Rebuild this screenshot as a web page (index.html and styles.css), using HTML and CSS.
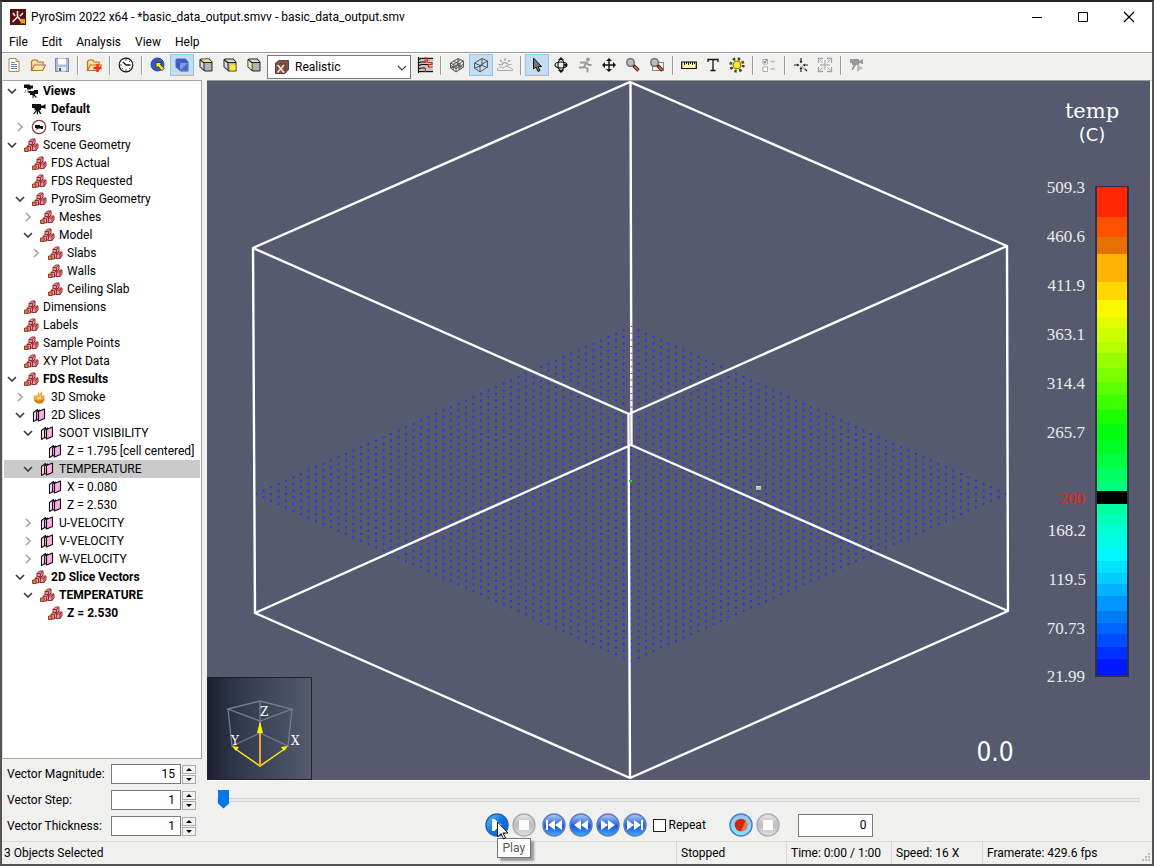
FILE: index.html
```html
<!DOCTYPE html>
<html lang="en">
<head>
<meta charset="utf-8">
<title>PyroSim 2022 x64</title>
<link rel="stylesheet" href="styles.css">
</head>
<body>
<svg class="defs" aria-hidden="true">
  <defs>
    <linearGradient id="gBlue" x1="0" y1="0" x2="0" y2="1"><stop offset="0" stop-color="#b9cdf4"/><stop offset=".35" stop-color="#4c86ea"/><stop offset=".55" stop-color="#1a56e0"/><stop offset="1" stop-color="#3fb0fa"/></linearGradient>
    <linearGradient id="gPlay" x1="0" y1="0" x2="1" y2="1"><stop offset="0" stop-color="#6fc4f6"/><stop offset=".5" stop-color="#0878e4"/><stop offset="1" stop-color="#0a58d8"/></linearGradient>
    <linearGradient id="gGray" x1="0" y1="0" x2="0" y2="1"><stop offset="0" stop-color="#e6e6e8"/><stop offset=".5" stop-color="#bcbcc0"/><stop offset="1" stop-color="#e2e2e4"/></linearGradient>
    <linearGradient id="gRec" x1="0" y1="0" x2="0" y2="1"><stop offset="0" stop-color="#9cc4f0"/><stop offset="1" stop-color="#7fe2ff"/></linearGradient>
    <linearGradient id="gBox"><stop offset="0" stop-color="#1c1f30"/><stop offset=".35" stop-color="#353c50"/><stop offset="1" stop-color="#555a6e"/></linearGradient>
    <symbol id="chev-d" viewBox="0 0 16 16"><path d="M4 6l4 4 4-4" fill="none" stroke="#404040" stroke-width="1.7"/></symbol>
    <symbol id="chev-r" viewBox="0 0 16 16"><path d="M6 4l4 4-4 4" fill="none" stroke="#a6a6a6" stroke-width="1.7"/></symbol>
    <symbol id="cubes" viewBox="0 0 16 16"><g fill="#e09aa0" stroke="#9a2a30" stroke-width="1" stroke-linejoin="round"><path d="M6 4.500L8.500 2H12v4L9.500 8.500H6z"/><path d="M6 4.500h3.500v4M9.500 4.500L12 2" fill="none"/><path d="M9 9l2-2h4v4l-2 2.500H9z"/><path d="M9 9h4v4.500M13 9l2-2" fill="none"/><path d="M4 9.500l2-2h3.500V12l-2 2H4z"/><path d="M4 9.500h3.500V14M7.500 9.500l2-2" fill="none"/></g><path d="M1.500 11h3.500v3.500H1.500z" fill="#d8823e" stroke="#9a3a20"/></symbol>
    <symbol id="slice" viewBox="0 0 16 16"><g fill="#f8aee2" stroke="#151015" stroke-width="1.1" stroke-linejoin="round"><path d="M2.500 5.500l4-3v9.500l-4 2.500z" fill="#fbe0f4"/><path d="M5.500 5l3-2v10.500l-3-1z"/><path d="M7.500 4.500l6-2.500v9.500l-6 2.500z"/></g></symbol>
    <symbol id="camera" viewBox="0 0 16 16"><path d="M1 3h9v1.500h2L14.500 3v5L12 7h-2v2H8.500l2 4H9L7 10v3.500H5.800V10L3.500 13H2l3-4H3.500V7H1z" fill="#111"/></symbol>
    <symbol id="cameras" viewBox="0 0 16 16"><path d="M1 1.500h6v1h3v3H8v1H4V5H1zM5 8h6V7h4v4h-3v1l2 2.500h-1.500l-2-2V15H9.500v-3H7v-2H5z" fill="#111"/><path d="M3 7l-1.500 3M5 7v3" stroke="#888"/></symbol>
    <symbol id="tour" viewBox="0 0 16 16"><circle cx="8" cy="8" r="6.700" fill="#fff" stroke="#8c3a34" stroke-width="1.200"/><path d="M4 6h5v1h3v3h-2v-.5H7L5.500 11V9H4z" fill="#111"/></symbol>
    <symbol id="fire" viewBox="0 0 16 16"><path d="M3 6C2 10 3 14 8 14.500s6.500-4 5-9l-1.500 2L11 2 8.500 5.500 7.500 3 6 7z" fill="#f2a63a"/><path d="M8 14.500c-3 0-4.500-2-5-4 3 1.500 7 1 10.500-.5-.4 2.500-2 4.500-5.500 4.500z" fill="#d87c1e"/><path d="M7 7l1 2 2-3v4H6z" fill="#ffe49a"/></symbol>
    <symbol id="shaded" viewBox="0 0 16 16"><path d="M1.500 2.500L3 1.500h8.500L14.500 5v9l-1 .5H6.500L1.500 10z" fill="#222"/><path d="M3 2.500h8l2.500 2.500H6z" fill="#d9d9d2"/><path d="M2.500 3.500L5.500 6.500v6l-3-3z" fill="#dcdcdc"/><path d="M6.500 6h7v7.500h-7z" fill="#b2b2b2"/></symbol>
    <symbol id="wire" viewBox="0 0 16 16"><path d="M1.500 6L9 1.500l5.500 2.500v6L7 15l-5.500-4zM1.500 6L7 8.500l7.500-4.500M7 8.500V15M9 1.500v7L1.500 11M9 8.500l5.500 2" fill="none" stroke="#555" stroke-width="1"/></symbol>
    <symbol id="glass" viewBox="0 0 16 16"><circle cx="5.500" cy="5.500" r="3.800" fill="#b6bcc0" stroke="#666" stroke-width="1.300"/><path d="M8.500 8.500l5 5" stroke="#5a1610" stroke-width="3.400"/><path d="M9.500 9.500l3.500 3.500" stroke="#d8806c" stroke-width="1.400"/></symbol>
    <symbol id="folder" viewBox="0 0 16 16"><path d="M1.500 13V4.500L3 3h4l1 2h5v3" fill="#f6dca4" stroke="#b87420" stroke-width="1.200"/><path d="M1.500 13.500L4.500 8h11l-3 5.500z" fill="#fce8ba" stroke="#b87420" stroke-width="1.200"/></symbol>
  </defs>
</svg>

<div class="window">
  <header class="titlebar">
    <svg class="logo" viewBox="0 0 16 16"><path d="M0 0h16v16H0z" fill="#5a0f12"/><path d="M7.500 2v6l-5 5M8 8l4 5M3 4l2 3M13 4l-3 3" fill="none" stroke="#f5e6df" stroke-width="1.600"/><path d="M10 10h5v5l-2-1-2 1z" fill="#f39a1d"/></svg>
    <h1>PyroSim 2022 x64 - *basic_data_output.smvv - basic_data_output.smv</h1>
    <div class="winbtns">
      <button aria-label="Minimize"><svg viewBox="0 0 12 12"><path d="M1 6.500h10" stroke="#000"/></svg></button>
      <button aria-label="Maximize"><svg viewBox="0 0 12 12"><path d="M1.500 1.500h9v9h-9z" fill="none" stroke="#000"/></svg></button>
      <button aria-label="Close"><svg viewBox="0 0 12 12"><path d="M1 1l10 10M11 1L1 11" stroke="#000" stroke-width="1.200"/></svg></button>
    </div>
  </header>
  <nav class="menubar"><button>File</button><button>Edit</button><button>Analysis</button><button>View</button><button>Help</button></nav>

  <div class="toolbar" role="toolbar">
    <button aria-label="New"><svg viewBox="0 0 16 16"><path d="M3 1.500h7l3 3v10H3z" fill="#fff" stroke="#b58a50"/><path d="M10 1.500v3h3" fill="none" stroke="#b58a50"/><path d="M5 5.500h4M5 7.500h6M5 9.500h6M5 11.500h6" stroke="#5d87b0"/></svg></button>
    <button aria-label="Open"><svg><use href="#folder"/></svg></button>
    <button aria-label="Save"><svg viewBox="0 0 16 16"><path d="M1.500 1.500h13v13h-13z" fill="#a9bdd8" stroke="#6c86ac"/><path d="M4 1.500h8v6H4z" fill="#fff"/><path d="M4 10h8v4.500H4z" fill="#e6ebf2"/><path d="M5 11h2v3H5z" fill="#3c5478"/></svg></button>
    <i class="sep"></i>
    <button aria-label="Merge"><svg viewBox="0 0 16 16"><use href="#folder"/><path d="M11.500 7v8M7.500 11h8" stroke="#fb2a10" stroke-width="2.400"/></svg></button>
    <i class="sep"></i>
    <button aria-label="Time"><svg viewBox="0 0 16 16"><circle cx="8" cy="8" r="6.800" fill="#fff" stroke="#111" stroke-width="1.200"/><path d="M8 8l-3-3M8 8h4.500" stroke="#111" stroke-width="1.300"/><path d="M8 2v2M8 12v2M2 8h2M12 4l-1 1M4 12l1-1M12 12l-1-1" stroke="#555"/></svg></button>
    <i class="sep"></i>
    <button aria-label="Pick"><svg viewBox="0 0 16 16"><circle cx="7.500" cy="7.500" r="6.500" fill="#3459c4" stroke="#2a469c"/><path d="M6 5.500h6l-1.800 1.800 4 4.200-2.200 2.200-4-4.200L6 11.500z" fill="#ffee20" stroke="#222" stroke-width=".8"/></svg></button>
    <button class="on" aria-label="Solid"><svg viewBox="0 0 16 16"><path d="M1.500 2.500L3 1.500h8.500L14.500 5v9l-1 .5H6.500L1.500 10z" fill="#3f5fc4"/><path d="M6 6h7.500v7.500H6z" fill="#8298dc"/><path d="M6 13.500L13.500 6v7.500z" fill="#4c6acb"/></svg></button>
    <button aria-label="Top"><svg viewBox="0 0 16 16"><use href="#shaded"/><path d="M3 2.500h8l2.500 2.500H6z" fill="#efdc7e"/></svg></button>
    <button aria-label="Front"><svg viewBox="0 0 16 16"><use href="#shaded"/><path d="M8 7.500h5.500v6H8z" fill="#fff01c"/></svg></button>
    <button aria-label="Side"><svg viewBox="0 0 16 16"><use href="#shaded"/><path d="M2.500 3.500L5.500 6.500v6l-3-3z" fill="#efe79a"/></svg></button>
    <div class="combo">
      <svg class="combo-icon" viewBox="0 0 16 16"><path d="M1.500 4L5 1.500h9.500v9L11 14.500H1.500z" fill="#a8503f" stroke="#4b4642"/><path d="M2 5h9.500v9M11.500 5l3-3M2 8h9M2 11h9M5 2l3 3M9 2l2 3M12 8l2.500-2M12 11l2.500-2" fill="none" stroke="#4b4946"/><path d="M3.500 6l6.500 7.500M10 6l-6.500 7.500" stroke="#f3ece8" stroke-width="1.400"/></svg>
      <select aria-label="Render mode"><option>Realistic</option></select>
      <svg class="combo-arrow" viewBox="0 0 12 12"><path d="M2 4l4 4 4-4" fill="none" stroke="#444" stroke-width="1.100"/></svg>
    </div>
    <button aria-label="Floors"><svg viewBox="0 0 16 16"><path d="M1 0h15v16H1z" fill="#c4c4c4"/><path d="M1.500 0v16M1 3l3-1.500h12M1 6l3-1h5M1 9l3-1.500h7M1 12l3-1h4M1 14.500h15" fill="none" stroke="#111" stroke-width="1.200"/><path d="M7 1h3.500v4H7M7 3h3M11 5.500h4v2h-3.500V10H15.500M8.500 11v4" fill="none" stroke="#d22a18" stroke-width="1.200"/></svg></button>
    <i class="sep"></i>
    <button aria-label="Mesh"><svg viewBox="0 0 16 16"><use href="#wire"/><path d="M4.200 7.200v5.800M1.500 8.500L7 11.500l7.500-4.300M4.500 4.200L10 7v6M11.500 2.800L4 7.500M11 6v6.500" fill="none" stroke="#555"/></svg></button>
    <button class="on" aria-label="Outline"><svg><use href="#wire"/></svg></button>
    <button aria-label="Scene"><svg viewBox="0 0 16 16"><path d="M.5 13.500V12L3 9.500l3 1.500 3-2 6.500 3v1.500z" fill="#f2f2f2" stroke="#a9a9a9"/><path d="M5 8.500a3 3 0 0 1 6 .3M8 4V1M4.800 5L3 3M11.200 5L13 3M4 7.500H1.500M12 7.500h2.500" fill="none" stroke="#a0a0a0" stroke-width="1.200"/></svg></button>
    <i class="sep"></i>
    <button class="on" aria-label="Select"><svg viewBox="0 0 16 16"><path d="M4.500 1v11l2.500-2 2 4.500 2-1L9 9.500h3.500z" fill="#777" stroke="#111"/></svg></button>
    <button aria-label="Orbit"><svg viewBox="0 0 16 16"><ellipse cx="8" cy="8" rx="3" ry="5.500" fill="none" stroke="#111" stroke-width="1.200"/><ellipse cx="8" cy="8" rx="6" ry="3" fill="none" stroke="#111" stroke-width="1.200"/><path d="M8 0L5 3h6zM8 16l-3-3h6zM10 8l4-2v4z" fill="#111"/><path d="M6 6h4v4H6z" fill="#f0f0ee"/></svg></button>
    <button aria-label="Walk"><svg viewBox="0 0 16 16"><circle cx="11" cy="2.500" r="1.900" fill="#9b9b9b"/><path d="M3 5.500h6.500l-3 5H2M9.500 5.500l2 2.500h3M6.500 9.500l4 2v4" fill="none" stroke="#9b9b9b" stroke-width="1.900"/></svg></button>
    <button aria-label="Pan"><svg viewBox="0 0 16 16"><path d="M8 2v12M2 8h12" stroke="#111" stroke-width="1.400"/><path d="M8 1L5 4h6zM8 15l-3-3h6zM1 8l3-3v6zM15 8l-3-3v6z" fill="#111"/></svg></button>
    <button aria-label="Zoom"><svg><use href="#glass"/></svg></button>
    <button aria-label="Zoom region"><svg viewBox="0 0 16 16"><path d="M3.500 5.500h11v8h-11z" fill="none" stroke="#222" stroke-dasharray="1 1"/><use href="#glass"/></svg></button>
    <i class="sep"></i>
    <button aria-label="Measure"><svg viewBox="0 0 16 16"><path d="M.7 5h14.600v6.500H.7z" fill="#fff6b0" stroke="#111" stroke-width="1.200"/><path d="M3.500 5v3M5.500 5v2M7.500 5v3M9.500 5v2M11.500 5v3M13.500 5v2" stroke="#111"/></svg></button>
    <button aria-label="Label"><svg viewBox="0 0 16 16"><path d="M3 5V2.500h10V5M8 2.500v11M5.500 13.500h5" fill="none" stroke="#111" stroke-width="1.300"/></svg></button>
    <button aria-label="Lighting"><svg viewBox="0 0 16 16"><circle cx="8" cy="8" r="6.300" fill="none" stroke="#4d4a10" stroke-width="2.800" stroke-dasharray="2.400 2.548"/><circle cx="8" cy="8" r="3.900" fill="#ffec1c" stroke="#7c7410"/></svg></button>
    <i class="sep"></i>
    <button aria-label="Options"><svg viewBox="0 0 16 16"><path d="M2 2.500h4.500V7H2zM2 10h4.500v4.500H2z" fill="#fff" stroke="#aaa"/><path d="M3 4l1 2 2-4" fill="none" stroke="#777"/><path d="M9.500 4.500H14M9.500 12H14" stroke="#bbb" stroke-width="1.600"/></svg></button>
    <i class="sep"></i>
    <button aria-label="Center"><svg viewBox="0 0 16 16"><path d="M8 1v4M8 11v4M1 8h4M11 8h4M12 12l2 2" stroke="#222" stroke-width="1.200"/><path d="M8 6.500L6.500 4h3zM8 9.500L6.500 12h3zM6.500 8L4 6.500v3zM9.500 8L12 6.500v3z" fill="#222"/><path d="M9 9l4 5" stroke="#c66"/></svg></button>
    <button aria-label="Fit"><svg viewBox="0 0 16 16"><path d="M1.500 6V1.500H6M10 1.500h4.500V6M14.500 10v4.500H10M6 14.500H1.500V10" fill="none" stroke="#a4a4a4" stroke-width="1.300"/><path d="M8 3v3.500M8 10v3M3 8h3.500M10 8h3M7 7h2v2H7zM3 3l2.500 2.500M13 3l-2.500 2.500M3 13l2.500-2.500M13 13l-2.500-2.500" fill="none" stroke="#a4a4a4"/></svg></button>
    <i class="sep"></i>
    <button aria-label="Record view"><svg viewBox="0 0 16 16"><path d="M1 2h9v2l4-2v5l-4-1v2H7l-3 5H2.500l2-5H3V6H1z" fill="#989898"/><path d="M8 7l6 4-6 4z" fill="#bcbcbc"/></svg></button>
  </div>

  <main class="main">
    <aside class="side">
      <ul class="tree">
        <li class="l0 b"><svg><use href="#chev-d"/></svg><svg><use href="#cameras"/></svg><span>Views</span></li>
        <li class="l1 b"><svg></svg><svg><use href="#camera"/></svg><span>Default</span></li>
        <li class="l1"><svg><use href="#chev-r"/></svg><svg><use href="#tour"/></svg><span>Tours</span></li>
        <li class="l0"><svg><use href="#chev-d"/></svg><svg><use href="#cubes"/></svg><span>Scene Geometry</span></li>
        <li class="l1"><svg></svg><svg><use href="#cubes"/></svg><span>FDS Actual</span></li>
        <li class="l1"><svg></svg><svg><use href="#cubes"/></svg><span>FDS Requested</span></li>
        <li class="l1"><svg><use href="#chev-d"/></svg><svg><use href="#cubes"/></svg><span>PyroSim Geometry</span></li>
        <li class="l2"><svg><use href="#chev-r"/></svg><svg><use href="#cubes"/></svg><span>Meshes</span></li>
        <li class="l2"><svg><use href="#chev-d"/></svg><svg><use href="#cubes"/></svg><span>Model</span></li>
        <li class="l3"><svg><use href="#chev-r"/></svg><svg><use href="#cubes"/></svg><span>Slabs</span></li>
        <li class="l3"><svg></svg><svg><use href="#cubes"/></svg><span>Walls</span></li>
        <li class="l3"><svg></svg><svg><use href="#cubes"/></svg><span>Ceiling Slab</span></li>
        <li class="l0"><svg></svg><svg><use href="#cubes"/></svg><span>Dimensions</span></li>
        <li class="l0"><svg></svg><svg><use href="#cubes"/></svg><span>Labels</span></li>
        <li class="l0"><svg></svg><svg><use href="#cubes"/></svg><span>Sample Points</span></li>
        <li class="l0"><svg></svg><svg><use href="#cubes"/></svg><span>XY Plot Data</span></li>
        <li class="l0 b"><svg><use href="#chev-d"/></svg><svg><use href="#cubes"/></svg><span>FDS Results</span></li>
        <li class="l1"><svg><use href="#chev-r"/></svg><svg><use href="#fire"/></svg><span>3D Smoke</span></li>
        <li class="l1"><svg><use href="#chev-d"/></svg><svg><use href="#slice"/></svg><span>2D Slices</span></li>
        <li class="l2"><svg><use href="#chev-d"/></svg><svg><use href="#slice"/></svg><span>SOOT VISIBILITY</span></li>
        <li class="l3"><svg></svg><svg><use href="#slice"/></svg><span>Z = 1.795 [cell centered]</span></li>
        <li class="l2 sel"><svg><use href="#chev-d"/></svg><svg><use href="#slice"/></svg><span>TEMPERATURE</span></li>
        <li class="l3"><svg></svg><svg><use href="#slice"/></svg><span>X = 0.080</span></li>
        <li class="l3"><svg></svg><svg><use href="#slice"/></svg><span>Z = 2.530</span></li>
        <li class="l2"><svg><use href="#chev-r"/></svg><svg><use href="#slice"/></svg><span>U-VELOCITY</span></li>
        <li class="l2"><svg><use href="#chev-r"/></svg><svg><use href="#slice"/></svg><span>V-VELOCITY</span></li>
        <li class="l2"><svg><use href="#chev-r"/></svg><svg><use href="#slice"/></svg><span>W-VELOCITY</span></li>
        <li class="l1 b"><svg><use href="#chev-d"/></svg><svg><use href="#cubes"/></svg><span>2D Slice Vectors</span></li>
        <li class="l2 b"><svg><use href="#chev-d"/></svg><svg><use href="#cubes"/></svg><span>TEMPERATURE</span></li>
        <li class="l3 b"><svg></svg><svg><use href="#cubes"/></svg><span>Z = 2.530</span></li>
      </ul>
      <form class="vectors">
        <div class="field"><label for="mag">Vector Magnitude:</label><input id="mag" type="text" value="15"><span class="spin"><button type="button" aria-label="Increase magnitude"><i class="up"></i></button><button type="button" aria-label="Decrease magnitude"><i class="down"></i></button></span></div>
        <div class="field"><label for="step">Vector Step:</label><input id="step" type="text" value="1"><span class="spin"><button type="button" aria-label="Increase step"><i class="up"></i></button><button type="button" aria-label="Decrease step"><i class="down"></i></button></span></div>
        <div class="field"><label for="thick">Vector Thickness:</label><input id="thick" type="text" value="1"><span class="spin"><button type="button" aria-label="Increase thickness"><i class="up"></i></button><button type="button" aria-label="Decrease thickness"><i class="down"></i></button></span></div>
      </form>
    </aside>

    <section class="stage">
      <div class="viewport">
        <svg class="scene" viewBox="207 81 943 699">
          <path id="dots" stroke="#3030e6" stroke-width="2" fill="none"/>
          <g stroke="#fff" stroke-width="2.400" fill="none" stroke-linejoin="round">
            <path d="M630 82L253 248L629 414L1007 246ZM255 613L631 445L1008 611L630 778ZM253 248L255 613M1007 246L1008 611M630.500 82L631.500 445M628.500 414L630 778"/>
          </g>
          <path d="M631.500 326V410" stroke="#54586d" stroke-width="2" stroke-dasharray="1 5.700"/>
          <path d="M629 480h3v2h-3z" fill="#17e01c"/>
          <path d="M756 486h5v4h-5z" fill="#b7b7b7"/><path d="M756 486h5v1h-5z" fill="#ddd"/>
          <g text-anchor="middle"><text x="1092" y="118" class="t1">temp</text><text x="1092" y="141" class="t2">(C)</text></g>
          <g class="nums" text-anchor="end">
            <text x="1085" y="193">509.3</text><text x="1085" y="242">460.6</text><text x="1085" y="291">411.9</text><text x="1085" y="340">363.1</text><text x="1085" y="389">314.4</text><text x="1085" y="438">265.7</text><text x="1085" y="504" class="red">200</text><text x="1086" y="536">168.2</text><text x="1086" y="585">119.5</text><text x="1085" y="634">70.73</text><text x="1085" y="682">21.99</text>
          </g>
          <path d="M1095 186h34v491h-34z" fill="#2d3148"/>
          <g id="bands" shape-rendering="crispEdges"></g>
          <text class="clock" x="995" y="761" text-anchor="middle">0.0</text>
          <path d="M207.500 677.500h104v102h-104z" fill="url(#gBox)" stroke="#222"/>
          <path d="M228 709L260 701L292 709L260 721ZM228 709L232 746L260 733L288 746L292 709M260 701V733" fill="none" stroke="#777b8e" stroke-width="1.300"/>
          <path d="M234 748L260 766L286 748" fill="none" stroke="#ffe320" stroke-width="1.500"/><path d="M260 766V730" stroke="#f0a53c" stroke-width="2"/>
          <path d="M260 721l3 12h-6zM232 746l7 1-3 4zM288 746l-7 1 3 4z" fill="#fff200"/>
          <g class="axes"><text x="260" y="716">Z</text><text x="231" y="745">Y</text><text x="291" y="745">X</text></g>
        </svg>
      </div>
      <input class="timeline" type="range" min="0" max="60" value="0" aria-label="Time">
      <div class="player">
        <div class="tipwrap">
          <button class="round" aria-label="Play"><svg viewBox="0 0 24 24"><circle cx="12" cy="12" r="11" fill="url(#gPlay)" stroke="#2c62b4" stroke-width="1.500"/><path d="M7 6h3v12H7zM9 6l8 6-8 6z" fill="#fff"/></svg></button>
          <svg class="cursor" viewBox="0 0 12 19"><path d="M.5 1v15l3.500-3.500L6.500 18l2-1-2.500-5h5z" fill="#fff" stroke="#111"/></svg>
          <span class="tip" role="tooltip">Play</span>
        </div>
        <button class="round" aria-label="Stop"><svg viewBox="0 0 24 24"><circle cx="12" cy="12" r="11" fill="url(#gGray)" stroke="#b0b0b4" stroke-width="1.500"/><path d="M7 7h10v10H7z" fill="#fafafa"/></svg></button>
        <i class="space"></i>
        <button class="round" aria-label="First"><svg viewBox="0 0 24 24"><circle cx="12" cy="12" r="11" fill="url(#gBlue)" stroke="#5f7fb8" stroke-width="1.500"/><path d="M4 7h2v10H4zM13 7v10l-7-5zM20 7v10l-7-5z" fill="#fff"/></svg></button>
        <button class="round" aria-label="Rewind"><svg viewBox="0 0 24 24"><circle cx="12" cy="12" r="11" fill="url(#gBlue)" stroke="#5f7fb8" stroke-width="1.500"/><path d="M12 7v10l-7-5zM19 7v10l-7-5z" fill="#fff"/></svg></button>
        <button class="round" aria-label="Forward"><svg viewBox="0 0 24 24"><circle cx="12" cy="12" r="11" fill="url(#gBlue)" stroke="#5f7fb8" stroke-width="1.500"/><path d="M5 7v10l7-5zM12 7v10l7-5z" fill="#fff"/></svg></button>
        <button class="round" aria-label="Last"><svg viewBox="0 0 24 24"><circle cx="12" cy="12" r="11" fill="url(#gBlue)" stroke="#5f7fb8" stroke-width="1.500"/><path d="M18 7h2v10h-2zM4 7v10l7-5zM11 7v10l7-5z" fill="#fff"/></svg></button>
        <label class="repeat"><input type="checkbox">Repeat</label>
        <button class="round" aria-label="Record"><svg viewBox="0 0 24 24"><circle cx="12" cy="12" r="11" fill="url(#gRec)" stroke="#4b82c8" stroke-width="1.500"/><circle cx="12" cy="12" r="6.300" fill="#cf2710"/><path d="M12 18.300A6.300 6.300 0 0 0 16.500 7.500z" fill="#e97445"/></svg></button>
        <button class="round" aria-label="Stop recording"><svg viewBox="0 0 24 24"><circle cx="12" cy="12" r="11" fill="url(#gGray)" stroke="#b0b0b4" stroke-width="1.500"/><path d="M7 7h10v10H7z" fill="#fafafa"/></svg></button>
        <input class="frame" type="text" value="0" aria-label="Frame">
      </div>
    </section>
  </main>

  <footer class="status"><span class="msg">3 Objects Selected</span><span class="c1">Stopped</span><span class="c2">Time: 0:00 / 1:00</span><span class="c3">Speed: 16 X</span><span class="c4">Framerate: 429.6 fps</span><svg class="grip" viewBox="0 0 10 10"><path d="M7 0h2v2H7zM7 3h2v2H7zM4 3h2v2H4zM7 6h2v2H7zM4 6h2v2H4zM1 6h2v2H1z" fill="#bdbdbd"/></svg></footer>
</div>
<script src="scene.js"></script>
</body>
</html>
```

FILE: styles.css
```css
* { box-sizing: border-box; }
body {
  margin: 0;
  font: 12px/18px Roboto, "Open Sans", sans-serif;
  color: #000;
  background: #666;
}
button { border: 0; padding: 0; background: none; font: inherit; color: inherit; }
h1 { margin: 0; font: inherit; }
svg { display: block; flex: none; }
.defs { position: absolute; width: 0; height: 0; }
.window {
  display: flex;
  flex-direction: column;
  min-height: 100vh;
  border: 2px solid #555;
  border-top-color: #222;
  background: #f0f0ee;
}
.titlebar { display: flex; align-items: center; height: 30px; padding-left: 8px; gap: 5px; background: #fff; }
.titlebar h1 { flex: 1; white-space: nowrap; }
.logo { width: 16px; height: 16px; }
.winbtns { display: flex; }
.winbtns button { display: grid; place-items: center; width: 46px; height: 30px; }
.winbtns svg { width: 12px; height: 12px; }
.menubar { display: flex; gap: 14px; height: 21px; padding-left: 7px; background: #fff; border-bottom: 1px solid #999; }
.menubar button { height: 19px; }
.toolbar { display: flex; align-items: center; height: 27px; padding-bottom: 4px; border-top: 1px solid #fff; }
.toolbar button { display: grid; place-items: center; width: 24px; height: 22px; border: 1px solid transparent; flex: none; }
.toolbar button svg { width: 16px; height: 16px; }
.toolbar .on { background: #c5dcf2; border-color: #88c4f4; }
.sep { width: 2px; height: 19px; margin: 0 3px; background: #999; border-right: 1px solid #fff; flex: none; }
.combo { position: relative; width: 144px; margin: 3px 2px 0 1px; }
.combo select { appearance: none; width: 100%; height: 24px; padding: 0 20px 0 27px; border: 1px solid #7a7a7a; border-radius: 0; background: #fff; font: inherit; color: #000; }
.combo-icon { position: absolute; left: 7px; top: 4px; width: 16px; height: 16px; }
.combo-arrow { position: absolute; right: 3px; top: 7px; width: 12px; height: 12px; }

.main { flex: 1; display: grid; grid-template-columns: 200px 1fr; gap: 5px; min-height: 0; }
.side { display: flex; flex-direction: column; }
.tree { flex: 1; margin: 0; padding: 1px; list-style: none; background: #fff; border: 1px solid #a2a4ac; border-left-color: #ddd; }
.tree li { display: flex; align-items: center; height: 18px; white-space: nowrap; }
.tree svg { width: 16px; height: 16px; }
.tree svg + svg { margin: 0 4px 0 3px; }
.tree .l1 { padding-left: 8px; }
.tree .l2 { padding-left: 16px; }
.tree .l3 { padding-left: 24px; }
.tree .b { font-weight: 700; }
.tree .sel { background: #cacaca; }
.vectors { padding: 2px 5px; }
.field { display: flex; align-items: center; height: 26px; }
.field label { width: 104px; white-space: nowrap; }
.field input { width: 70px; height: 20px; padding: 0 5px; border: 1px solid #7a7a7a; background: #fff; font: inherit; text-align: right; }
.spin { display: grid; gap: 1px; margin-left: 1px; }
.spin button { display: grid; place-items: center; width: 14px; height: 9px; border: 1px solid #adadad; background: #f2f2f2; }
.up, .down { width: 0; border: 3px solid transparent; }
.up { border-top: 0; border-bottom-color: #000; }
.down { border-bottom: 0; border-top-color: #000; }

.stage { display: flex; flex-direction: column; min-width: 0; }
.viewport { flex: 1; min-height: 0; background: #555a6e; border-right: 2px solid #fff; border-bottom: 1px solid #fff; border-top: 1px solid #999; overflow: hidden; }
.scene { width: 100%; height: 100%; }
.t1 { font: 21px "DejaVu Serif", serif; fill: #fff; }
.t2 { font: 18px "DejaVu Sans", sans-serif; fill: #fff; }
.nums { font: 17px "Liberation Serif", serif; fill: #ececec; }
.nums .red { fill: #f0200a; }
.clock { font: 26px "DejaVu Sans Condensed", "DejaVu Sans", sans-serif; fill: #fff; }
.axes { font: 12px "DejaVu Serif", serif; fill: #fff; }
.timeline { appearance: none; height: 19px; margin: 9px 12px 0 10px; background: none; }
.timeline::-webkit-slider-runnable-track { height: 4px; border: 1px solid #d4d4d4; background: #e6eaea; }
.timeline::-webkit-slider-thumb { appearance: none; width: 11px; height: 19px; margin-top: -9px; background: #0277e8; clip-path: polygon(0 0, 100% 0, 100% 74%, 50% 100%, 0 74%); }
.player { display: flex; align-items: center; justify-content: center; gap: 3px; height: 32px; padding-right: 2px; }
.round, .round svg { width: 24px; height: 24px; flex: none; }
.round { display: block; }
.space { width: 0; }
.tipwrap { position: relative; }
.cursor { position: absolute; left: 12px; top: 8px; width: 12px; height: 19px; z-index: 3; }
.tip { position: absolute; left: 12px; top: 25px; z-index: 2; padding: 0 5px; border: 1px solid #767676; background: #fff; color: #575757; box-shadow: 3px 3px 2px #9a9a9a; }
.repeat { display: flex; align-items: center; gap: 3px; width: 73px; margin-left: 3px; }
.repeat input { appearance: none; width: 13px; height: 13px; margin: 0; border: 1px solid #222; background: #fff; }
.frame { width: 75px; height: 23px; margin-left: 15px; padding: 0 5px; border: 1px solid #7a7a7a; font: inherit; text-align: right; }

.status { position: relative; display: flex; height: 23px; border-top: 1px solid #d7d7d7; line-height: 23px; white-space: nowrap; }
.status span { padding-left: 4px; border-left: 1px solid #d7d7d7; }
.status .msg { flex: 1; padding-left: 2px; border: 0; }
.c1 { width: 110px; }
.c2 { width: 105px; }
.c3 { width: 91px; }
.c4 { width: 170px; }
.grip { position: absolute; right: 1px; bottom: 1px; width: 10px; height: 10px; }
```

FILE: scene.js
```js
// Vector sample grid: 51 x 51 points on the horizontal slice
let d = "";
for (let i = 0; i <= 50; i++) {
  for (let j = 0; j <= 50; j++) {
    const x = 631 + (i - j) * 7.5;
    const y = 327 + (i + j) * 3.34;
    d += `M${(x - 1).toFixed(1)} ${y.toFixed(1)}h2`;
  }
}
document.getElementById("dots").setAttribute("d", d);

// Colour scale: lower edge of each band and its colour
const bands = [
  [217, "#ff2800"], [237, "#ff5000"], [254, "#e87000"], [282, "#ffb400"], [300, "#ffd800"],
  [317, "#faf800"], [328, "#e4fa00"], [342, "#ccff00"], [353, "#b4ff00"], [368, "#98ff00"],
  [382, "#7cff00"], [395, "#5cff00"], [410, "#3cff00"], [424, "#1cff00"], [441, "#00ff0c"],
  [454, "#00ff28"], [468, "#00ff40"], [481, "#00ff60"], [491, "#00ff80"], [504, "#000000"],
  [514, "#00ffa0"], [525, "#00ffb8"], [537, "#00ffd4"], [548, "#00ffea"], [561, "#00faff"],
  [573, "#00e2ff"], [584, "#00ccff"], [596, "#00b2ff"], [611, "#0096ff"], [623, "#007cf4"],
  [634, "#0064ff"], [647, "#004cff"], [659, "#0030ff"], [675, "#0018ff"]
];
let top0 = 187;
let out = "";
for (const [y, c] of bands) {
  out += `<rect x="1097" y="${top0}" width="30" height="${y - top0}" fill="${c}"/>`;
  top0 = y;
}
document.getElementById("bands").innerHTML = out;
```
